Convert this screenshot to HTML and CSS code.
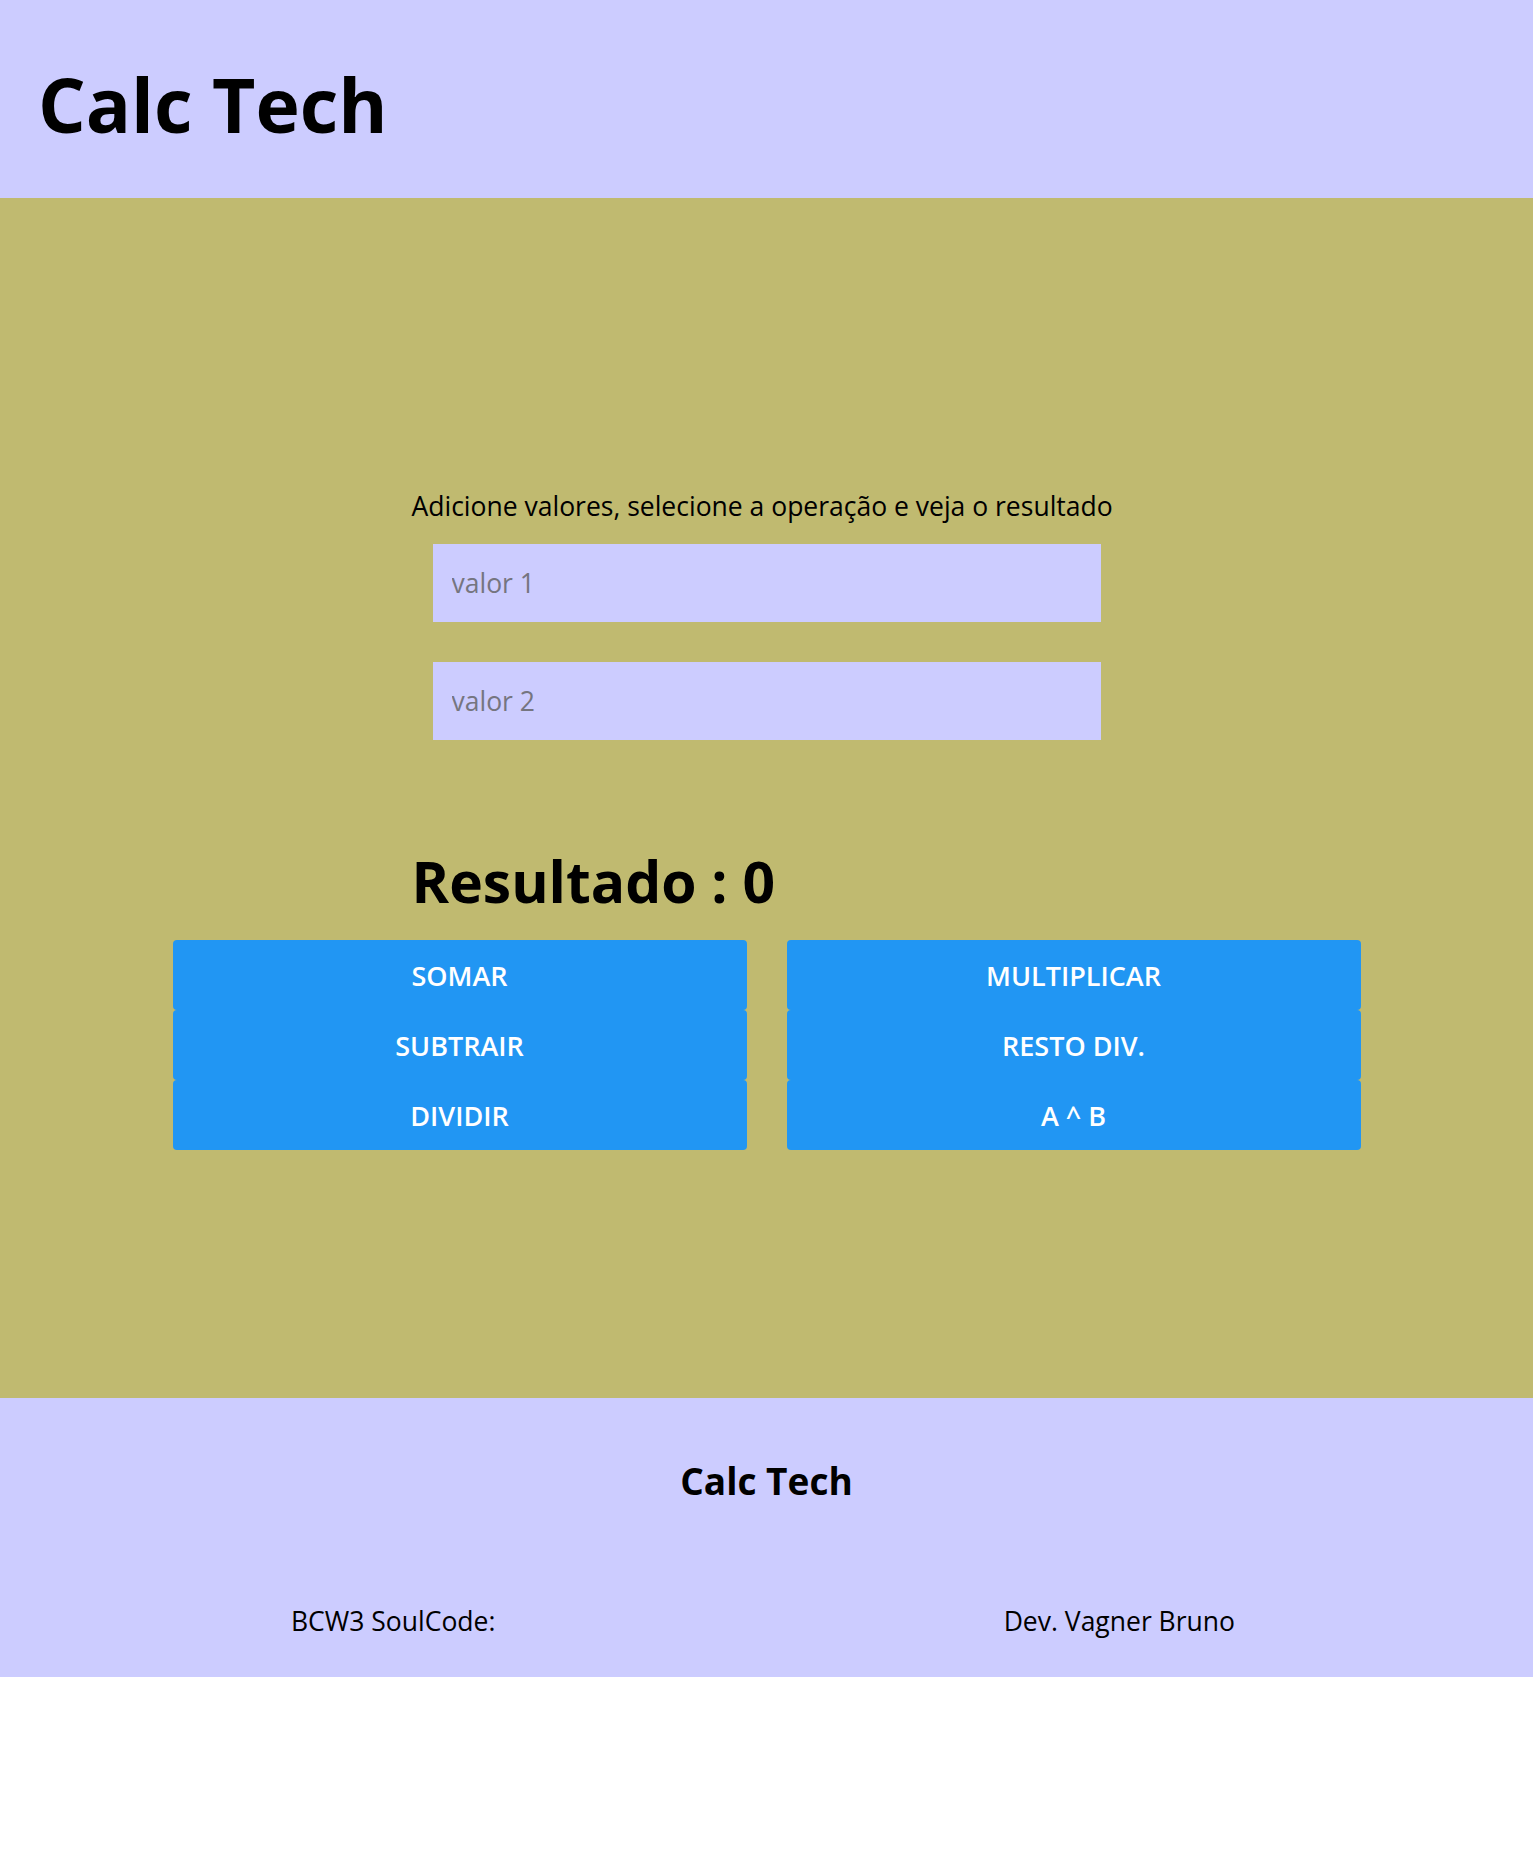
FILE: index.html
```html
<!DOCTYPE html>
<html lang="pt-BR">
<head>
<meta charset="utf-8">
<title>Calc Tech</title>
<link rel="stylesheet" href="styles.css">
</head>
<body>
<header class="top">
  <h1 class="brand">Calc Tech</h1>
</header>
<main class="main">
  <section class="calc">
    <p class="hint">Adicione valores, selecione a operação e veja o resultado</p>
    <input class="field" type="text" placeholder="valor 1">
    <input class="field field-second" type="text" placeholder="valor 2">
    <h2 class="result">Resultado : 0</h2>
  </section>
  <section class="ops">
    <div class="col">
      <button class="op">SOMAR</button>
      <button class="op">SUBTRAIR</button>
      <button class="op">DIVIDIR</button>
    </div>
    <div class="col">
      <button class="op">MULTIPLICAR</button>
      <button class="op">RESTO DIV.</button>
      <button class="op">A ^ B</button>
    </div>
  </section>
</main>
<footer class="foot">
  <h2 class="foot-title">Calc Tech</h2>
  <div class="foot-row">
    <span class="foot-text">BCW3 SoulCode:</span>
    <span class="foot-text">Dev. Vagner Bruno</span>
  </div>
</footer>
</body>
</html>
```
FILE: styles.css
```css
* { box-sizing: border-box; }
html, body { margin: 0; padding: 0; background: #ffffff; }
body {
  font-family: "Open Sans", "Noto Sans", "Liberation Sans", sans-serif;
  color: #000;
}
.top {
  background: #ccccff;
  height: 198px;
  padding: 59px 0 0 38px;
}
.brand {
  margin: 0;
  font-size: 75px;
  line-height: 90px;
  font-weight: 700;
}
.main {
  background: #c0ba70;
  height: 1200px;
  padding-top: 290px;
}
.calc {
  width: 710px;
  margin: 0 auto;
}
.hint {
  margin: 0;
  font-size: 26.5px;
  line-height: 36px;
  white-space: nowrap;
}
.field {
  display: block;
  width: 668px;
  height: 78px;
  margin: 20px auto 0;
  border: none;
  outline: none;
  background: #ccccff;
  padding: 0 19px;
  font-family: inherit;
  font-size: 26.5px;
  color: #000;
}
.field::placeholder { color: #757580; }
.field-second { margin-top: 40px; }
.result {
  margin: 107px 0 0;
  font-size: 57px;
  line-height: 68px;
  font-weight: 700;
}
.ops {
  width: 1188px;
  margin: 25px auto 0;
  display: grid;
  grid-template-columns: 1fr 1fr;
  column-gap: 40px;
}
.col {
  display: flex;
  flex-direction: column;
}
.op {
  height: 70px;
  border: none;
  border-radius: 4px;
  background: #2196f3;
  color: #ffffff;
  font-family: inherit;
  font-size: 27px;
  font-weight: 600;
  cursor: pointer;
}
.foot {
  background: #ccccff;
  height: 279px;
  padding-top: 61px;
}
.foot-title {
  margin: 0;
  text-align: center;
  font-size: 37px;
  line-height: 44px;
  font-weight: 700;
}
.foot-row {
  margin-top: 102px;
  display: flex;
  justify-content: space-between;
  padding: 0 298px 0 291px;
}
.foot-text {
  font-size: 26.5px;
  line-height: 32px;
}
```
